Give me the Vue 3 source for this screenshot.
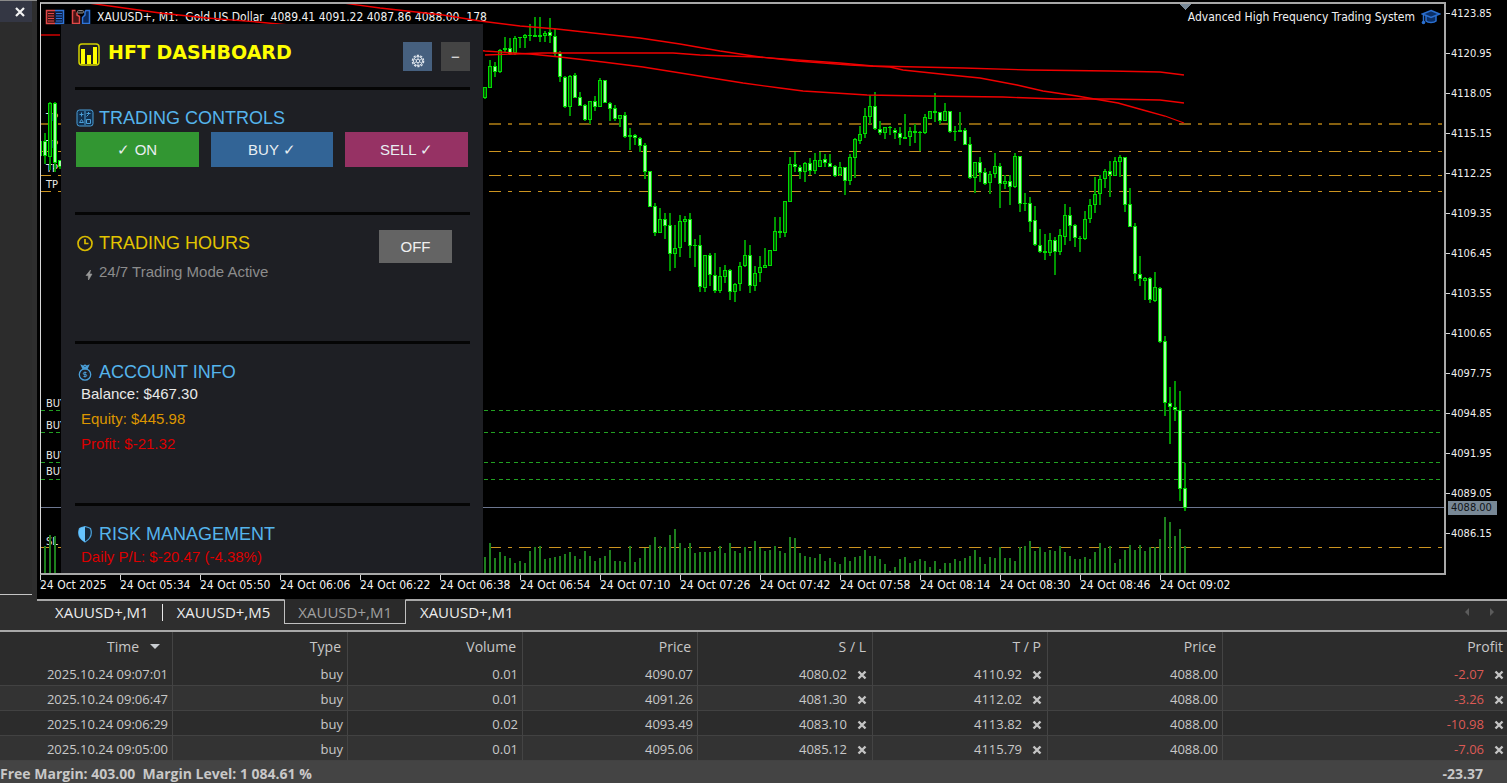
<script setup>
const prices = ['4123.85', '4120.95', '4118.05', '4115.15', '4112.25', '4109.35', '4106.45', '4103.55', '4100.65', '4097.75', '4094.85', '4091.95', '4089.05', '4086.15']
const times = ['24 Oct 2025', '24 Oct 05:34', '24 Oct 05:50', '24 Oct 06:06', '24 Oct 06:22', '24 Oct 06:38', '24 Oct 06:54', '24 Oct 07:10', '24 Oct 07:26', '24 Oct 07:42', '24 Oct 07:58', '24 Oct 08:14', '24 Oct 08:30', '24 Oct 08:46', '24 Oct 09:02']
const tabs = ['XAUUSD+,M1', 'XAUUSD+,M5', 'XAUUSD+,M1', 'XAUUSD+,M1']
const trades = [
  { time: '2025.10.24 09:07:01', volume: '0.01', open: '4090.07', sl: '4080.02', tp: '4110.92', profit: '-2.07' },
  { time: '2025.10.24 09:06:47', volume: '0.01', open: '4091.26', sl: '4081.30', tp: '4112.02', profit: '-3.26' },
  { time: '2025.10.24 09:06:29', volume: '0.02', open: '4093.49', sl: '4083.10', tp: '4113.82', profit: '-10.98' },
  { time: '2025.10.24 09:05:00', volume: '0.01', open: '4095.06', sl: '4085.12', tp: '4115.79', profit: '-7.06' },
]

// Candle rows: high, low, body top, body bottom, falling flag; three units per pixel.
const series = [
  { x: 40, step: 5, base: 0, rows: [[420, 470, 423, 468, 0], [400, 493, 423, 468, 1], [306, 510, 308, 470, 0], [306, 515, 308, 490, 1], [480, 507, 480, 500, 1]] },
  { x: 485, step: 5, base: 0, rows: [
    [262, 298, 262, 295, 0], [180, 265, 199, 264, 0], [187, 230, 199, 215, 1], [146, 220, 151, 215, 0], [112, 157, 143, 151, 0], [115, 165, 143, 163, 1], [108, 165, 113, 160, 0], [112, 145, 112, 115, 0], [103, 145, 106, 115, 0], [73, 123, 105, 108, 0],
    [52, 110, 105, 110, 0], [52, 125, 105, 110, 0], [93, 125, 98, 109, 0], [55, 130, 97, 108, 1], [87, 172, 108, 163, 1], [153, 245, 160, 231, 1], [228, 325, 230, 320, 1], [225, 347, 227, 320, 0], [220, 295, 226, 293, 1], [277, 317, 292, 317, 1],
    [313, 363, 316, 361, 1], [303, 373, 304, 361, 0], [289, 332, 304, 320, 1], [235, 322, 241, 320, 0], [239, 310, 240, 308, 1], [307, 362, 308, 328, 1], [315, 362, 325, 358, 1], [345, 380, 346, 357, 0], [337, 414, 346, 410, 1], [385, 449, 406, 410, 0],
    [403, 434, 405, 413, 1], [412, 455, 413, 437, 1], [430, 538, 435, 515, 1], [513, 620, 514, 620, 1], [610, 707, 619, 699, 1], [625, 700, 657, 699, 0], [640, 718, 657, 677, 1], [640, 812, 676, 763, 1], [675, 805, 743, 763, 0], [644, 771, 664, 745, 0],
    [648, 725, 657, 665, 0], [640, 775, 657, 737, 1], [717, 800, 735, 738, 0], [704, 876, 736, 860, 1], [765, 876, 766, 863, 0], [760, 857, 766, 826, 1], [760, 880, 826, 872, 1], [801, 880, 829, 872, 0], [794, 850, 811, 830, 0], [808, 899, 811, 875, 1],
    [850, 907, 852, 875, 0], [787, 872, 799, 853, 0], [719, 800, 766, 797, 0], [734, 880, 766, 857, 1], [797, 872, 818, 857, 0], [768, 846, 802, 818, 0], [745, 805, 796, 804, 0], [750, 797, 751, 797, 0], [652, 752, 694, 752, 0], [652, 714, 694, 699, 0],
    [603, 710, 604, 699, 0], [472, 606, 493, 605, 0], [455, 517, 491, 500, 1], [494, 538, 500, 515, 1], [487, 546, 488, 515, 0], [475, 526, 488, 512, 1], [460, 523, 481, 512, 0], [455, 500, 481, 500, 0], [463, 500, 478, 490, 1], [463, 502, 488, 500, 1], [495, 530, 499, 527, 1],
  ] },
  { x: 840, step: 5, base: 60, rows: [
    [306, 348, 322, 346, 0], [321, 405, 322, 362, 1], [281, 375, 292, 362, 0], [234, 354, 237, 293, 0], [198, 252, 221, 242, 0], [145, 235, 169, 223, 0], [104, 192, 139, 170, 0], [96, 209, 139, 207, 1], [183, 224, 206, 219, 1], [201, 238, 202, 219, 0],
    [197, 224, 202, 205, 0], [205, 238, 210, 218, 1], [202, 255, 218, 235, 1], [163, 238, 230, 236, 1], [202, 257, 214, 230, 0], [192, 250, 213, 218, 0], [213, 273, 215, 218, 0], [163, 223, 172, 220, 0], [153, 178, 154, 176, 0], [98, 186, 154, 159, 0],
    [155, 192, 157, 182, 1], [130, 183, 154, 182, 0], [152, 219, 154, 215, 1], [198, 242, 213, 216, 0], [155, 217, 211, 216, 0], [205, 256, 210, 254, 1], [232, 356, 252, 354, 1], [306, 400, 307, 354, 0], [291, 365, 307, 338, 1], [325, 374, 337, 371, 1],
    [333, 401, 341, 370, 0], [280, 354, 319, 343, 0], [310, 445, 319, 373, 1], [346, 388, 364, 373, 0], [346, 434, 364, 380, 1], [280, 384, 289, 381, 0], [288, 456, 289, 433, 1], [400, 452, 429, 433, 0], [411, 516, 428, 485, 1], [437, 557, 480, 556, 1],
    [508, 580, 556, 576, 1], [523, 599, 574, 578, 0], [520, 587, 541, 578, 0], [532, 644, 541, 575, 1], [508, 584, 526, 575, 0], [433, 554, 466, 530, 0], [442, 542, 466, 497, 1], [492, 560, 494, 533, 1], [528, 576, 533, 538, 0], [453, 539, 478, 538, 0],
    [418, 490, 436, 478, 0], [352, 460, 402, 436, 0], [346, 434, 356, 403, 0], [328, 385, 334, 357, 0],
  ] },
  { x: 1110, step: 5, base: 100, rows: [
    [183, 292, 213, 226, 1], [172, 228, 183, 227, 0], [164, 231, 172, 185, 0], [171, 336, 172, 314, 1], [265, 382, 311, 381, 1], [370, 542, 379, 523, 1], [468, 557, 521, 538, 1], [530, 600, 533, 542, 0], [530, 610, 533, 601, 1], [516, 606, 562, 602, 0],
    [561, 730, 563, 725, 1], [708, 947, 724, 908, 1], [862, 1033, 908, 920, 1], [843, 963, 922, 931, 1], [873, 1202, 931, 1167, 1], [1090, 1232, 1165, 1223, 1],
  ] },
]
const px = (v, base) => Math.round(v / 3) + base
const candles = series.flatMap(s => s.rows.map(([h, l, t, b, down], i) => {
  const top = px(t, s.base)
  return { x: s.x + i * s.step, high: px(h, s.base), low: px(l, s.base), top, size: Math.max(px(b, s.base) - top, 1), down }
}))

const volumeTops = [171, 130, 175, 156, 167, 175, 190, 182, 190, 152, 142, 138, 178, 175, 171, 167, 163, 156, 167, 178, 152, 167, 182, 175, 167, 149, 182, 182, 186, 138, 186, 175, 145, 134, 111, 137, 142, 104, 86, 130, 145, 130, 159, 156, 156, 156, 152, 138, 159, 130, 152, 159, 142, 152, 123, 145, 152, 149, 137, 152, 159, 111, 115, 159, 167, 171, 175, 163, 182, 175, 186, 193, 171, 182, 171, 167, 149, 167, 167, 178, 193, 212, 201, 178, 171, 190, 182, 178, 182, 201, 182, 208, 190, 190, 178, 182, 175, 167, 149, 171, 193, 171, 175, 142, 175, 175, 182, 142, 138, 123, 152, 142, 156, 149, 152, 138, 156, 167, 178, 178, 171, 178, 156, 130, 145, 138, 190, 178, 149, 134, 149, 134, 152, 142, 142, 118, 51, 66, 107, 88, 138]
const volumes = [{ x: 45, y: 546 }, { x: 50, y: 535 }, { x: 55, y: 536 }, ...volumeTops.map((v, i) => ({ x: 485 + i * 5, y: 500 + Math.round(v / 3) }))]

const averages = [
  '41,35 60,35',
  '88,3 117,7 160,13 207,18 257,22 300,26 485,51 530,54 560,57 603,62 643,67 693,75 743,83 780,88 803,91 867,95 923,96 1003,97 1057,99 1110,99 1160,100 1184,103',
  '343,3 380,8 443,15 480,21 520,26 557,29 593,33 640,38 680,44 720,51 760,57 797,61 850,65 890,67 903,70 950,75 980,78 1017,85 1043,91 1077,96 1118,103 1143,110 1165,116 1184,123',
  '485,55 515,54 542,53 673,53 700,55 757,57 840,63 873,66 963,68 1030,70 1110,71 1160,72 1184,75',
]
const targets = [151, 175, 191, 547]
const entries = [{ y: 410, t: 407 }, { y: 432, t: 429 }, { y: 462, t: 459 }, { y: 479, t: 475 }]
const tpLabels = [121, 148, 172, 188]
</script>

<template>
  <div class="terminal">
    <div class="workspace">
      <aside class="dock">
        <div class="dock-pane">
          <button class="dock-close" aria-label="Close pane">
            <svg width="12" height="12" viewBox="0 0 12 12"><path d="M2 2l8 8M10 2l-8 8" stroke="#f4f4f4" stroke-width="2.2" /></svg>
          </button>
        </div>
      </aside>

      <main class="main">
        <section class="chart">
          <div class="chart-body">
            <div class="plot">
              <div class="plot-head">
                <svg width="20" height="16" viewBox="0 0 20 16" fill="none">
                  <path d="M10 1.500H1.500V14.500H10" fill="#3a1010" stroke="#e04848" stroke-width="1.500" />
                  <path d="M10 1.500h8.500v13H10" fill="#0b1f45" stroke="#2f74d8" stroke-width="1.500" />
                  <path d="M3 4.500h6M3 7h6M3 9.500h6M3 12h6" stroke="#e04848" />
                  <path d="M11 4.500h6M11 7h6M11 9.500h6M11 12h6" stroke="#2f74d8" />
                </svg>
                <svg width="20" height="16" viewBox="0 0 20 16" fill="none">
                  <path d="M4.500 1.500h-3v13h7v-7L6 6V3.500" fill="#4a1515" stroke="#e04848" stroke-width="1.500" />
                  <path d="M15 1.500h3.500v13h-7V8.500L14 6V3z" fill="#0b2a5c" stroke="#2f74d8" stroke-width="1.500" />
                  <rect x="6.500" y="1.500" width="6" height="2.500" rx="1" fill="#222" stroke="#8a8a8a" />
                </svg>
                <span class="symbol">XAUUSD+, M1:&nbsp; Gold US Dollar&nbsp; 4089.41 4091.22 4087.86 4088.00&nbsp; 178</span>
                <span class="expert">Advanced High Frequency Trading System</span>
                <svg width="20" height="16" viewBox="0 0 20 16" fill="none">
                  <path d="M5 7v5c2 2 8 2 10 0V7" fill="#0b2f66" stroke="#2a6fd0" stroke-width="1.500" />
                  <path d="M10 1.500l8.500 3.500L10 8.500 1.500 5z" fill="#0b2f66" stroke="#2a6fd0" stroke-width="1.500" />
                  <path d="M2.500 5.500v7" stroke="#2a6fd0" stroke-width="1.500" />
                  <circle cx="2.500" cy="13.500" r="1.800" fill="#2a6fd0" />
                </svg>
              </div>

              <svg class="plot-art" width="100%" height="100%" shape-rendering="crispEdges">
                <g transform="translate(-41 -4)">
                  <path d="M1179 4h12l-6 6z" fill="#788896" />
                  <g stroke-dasharray="12 7 4 7">
                    <line x1="39" y1="124" x2="4000" y2="124" stroke="#86600f" stroke-width="2" />
                    <line v-for="y in targets" :key="y" x1="39" :y1="y + 0.5" x2="4000" :y2="y + 0.5" stroke="#cc9420" />
                  </g>
                  <g stroke="#22a022" stroke-dasharray="4 3.5">
                    <line v-for="e in entries" :key="e.y" x1="41" :y1="e.y + 0.5" x2="4000" :y2="e.y + 0.5" />
                  </g>
                  <g fill="#e8e8e8" class="order-label">
                    <text v-for="y in tpLabels" :key="y" x="46" :y="y">TP</text>
                    <text v-for="e in entries" :key="e.t" x="46" :y="e.t">BUY</text>
                    <text x="46" y="545">SL</text>
                  </g>
                  <line x1="41" y1="507.500" x2="4000" y2="507.500" stroke="#6c7690" />
                  <rect v-for="v in volumes" :key="v.x" :x="v.x - 1" :y="v.y" width="2" :height="573 - v.y" fill="#1e7f1e" />
                  <g v-for="(c, i) in candles" :key="i">
                    <rect :x="c.x - 1" :y="c.high" width="2" :height="c.low - c.high" fill="#009600" />
                    <rect :x="c.x - 2" :y="c.top" width="4" :height="c.size" fill="#00dc00" />
                    <rect v-if="c.size > 2" :x="c.x - 1" :y="c.top + 1" width="2" :height="c.size - 2" :fill="c.down ? '#a4ffa4' : '#005c00'" />
                  </g>
                  <polyline v-for="a in averages" :key="a" :points="a" fill="none" stroke="#f00000" stroke-width="1.3" shape-rendering="auto" />
                </g>
              </svg>

              <div class="panel">
                <header class="panel-head">
                  <svg class="logo" width="22" height="23" viewBox="0 0 22 23">
                    <rect x="1" y="1" width="20" height="21" rx="3" fill="none" stroke="#d2d200" stroke-width="1.500" />
                    <path d="M3 6h4v15H3zM9 12h4v9H9zM15 4h4v17h-4z" fill="#ffff00" />
                  </svg>
                  <h1>HFT DASHBOARD</h1>
                  <button class="head-btn gear" aria-label="Settings">
                    <svg width="14" height="14" viewBox="0 0 14 14" fill="none" stroke="#dfe6ee">
                      <circle cx="7" cy="7" r="5.600" stroke-width="1.400" stroke-dasharray="2.200 1.300" />
                      <circle cx="7" cy="7" r="4.500" />
                      <circle cx="7" cy="7" r="1.800" />
                      <path d="M7 2.500v3M7 8.500v3M3 4.800l2.500 1.400M8.500 7.800L11 9.200M11 4.800L8.500 6.200M5.500 7.800L3 9.200" stroke-width=".8" />
                    </svg>
                  </button>
                  <button class="head-btn" aria-label="Minimize">−</button>
                </header>

                <section class="block controls">
                  <h2>
                    <svg width="18" height="18" viewBox="0 0 18 18" fill="none" stroke="#4a9fd8">
                      <rect x="1" y="1" width="16" height="16" rx="2.500" fill="#12304e" />
                      <path d="M3.500 5.500h4M5.500 3.500v4M10.500 4.500h4M12.500 3v2.500l-2 2M3.500 13.500l2-3 2 3zM10.500 10.500h4v4h-4zM9 2v14" />
                    </svg>
                    TRADING CONTROLS
                  </h2>
                  <div class="toggles">
                    <button class="on">✓ ON</button>
                    <button class="buy">BUY ✓</button>
                    <button class="sell">SELL ✓</button>
                  </div>
                </section>

                <section class="block hours">
                  <div class="hours-row">
                    <h2 class="gold">
                      <svg width="18" height="18" viewBox="0 0 18 18" fill="none" stroke="#d8ba00" stroke-width="1.700">
                        <circle cx="9" cy="9.500" r="7" />
                        <path d="M9 5V9.500H12.500" />
                      </svg>
                      TRADING HOURS
                    </h2>
                    <button class="off">OFF</button>
                  </div>
                  <p class="mode">
                    <svg width="8" height="12" viewBox="0 0 8 12"><path d="M5.500 1L1 6.500h2.200L3.500 11 7 5H4.600z" fill="#9a9a9a" stroke="#9a9a9a" stroke-width=".6" /></svg>
                    24/7 Trading Mode Active
                  </p>
                </section>

                <section class="block account">
                  <h2>
                    <svg width="18" height="18" viewBox="0 0 18 18" fill="none" stroke="#4a9fd8" stroke-width="1.300">
                      <circle cx="9" cy="11.500" r="5.700" />
                      <path d="M7 5.800L5.500 2.500l2 .8L9 2l1.500 1.300 2-.8L11 5.800zM6.500 4.500h5" />
                      <path d="M10.500 9.500H8.300a1 1 0 000 2h1.400a1 1 0 010 2H7.500M9 8.500v6" stroke-width="1" />
                    </svg>
                    ACCOUNT INFO
                  </h2>
                  <p>Balance: $467.30</p>
                  <p class="equity">Equity: $445.98</p>
                  <p class="loss">Profit: $-21.32</p>
                </section>

                <section class="block risk">
                  <h2>
                    <svg width="18" height="18" viewBox="0 0 18 18">
                      <path d="M9 1.500c2 .5 4 1 5.500 2 2 5.500.5 10-5.500 13.500C3 13.500 1.500 9 3.500 3.500 5 2.500 7 2 9 1.500z" fill="#16283a" stroke="#4a9fd8" stroke-width="1.200" />
                      <path d="M9 1.500C7 2 5 2.500 3.500 3.500 1.500 9 3 13.500 9 17z" fill="#66c4ff" />
                    </svg>
                    RISK MANAGEMENT
                  </h2>
                  <p class="loss">Daily P/L: $-20.47 (-4.38%)</p>
                </section>
              </div>
            </div>

            <ul class="price-axis">
              <li v-for="p in prices" :key="p">{{ p }}</li>
              <li class="current">4088.00</li>
            </ul>
          </div>
          <ul class="time-axis">
            <li v-for="t in times" :key="t">{{ t }}</li>
          </ul>
        </section>

        <nav class="tabs">
          <button v-for="(t, i) in tabs" :key="i" :class="{ active: i === 2, first: i === 0 }">{{ t }}</button>
          <div class="arrows">
            <button aria-label="Scroll tabs left"><svg width="6" height="8" viewBox="0 0 6 8"><path d="M5 0v8L1 4z" fill="#5c5c5c" /></svg></button>
            <button aria-label="Scroll tabs right"><svg width="6" height="8" viewBox="0 0 6 8"><path d="M1 0v8l4-4z" fill="#5c5c5c" /></svg></button>
          </div>
        </nav>
      </main>
    </div>

    <table class="trades">
      <colgroup>
        <col class="c-time"><col class="c"><col class="c"><col class="c"><col class="c"><col class="c"><col class="c"><col>
      </colgroup>
      <thead>
        <tr>
          <th><button class="sort">Time <svg width="10" height="5" viewBox="0 0 10 5"><path d="M0 0h10L5 5z" fill="#c8ccd0" /></svg></button></th>
          <th>Type</th>
          <th>Volume</th>
          <th>Price</th>
          <th>S / L</th>
          <th>T / P</th>
          <th>Price</th>
          <th>Profit</th>
        </tr>
      </thead>
      <tbody>
        <tr v-for="t in trades" :key="t.time">
          <td>{{ t.time }}</td>
          <td>buy</td>
          <td>{{ t.volume }}</td>
          <td>{{ t.open }}</td>
          <td>{{ t.sl }}<button class="x" aria-label="Remove stop loss"><svg width="10" height="10" viewBox="0 0 10 10"><path d="M1.500 1.500l7 7M8.500 1.500l-7 7" stroke="#c4c4c4" stroke-width="2.400" /></svg></button></td>
          <td>{{ t.tp }}<button class="x" aria-label="Remove take profit"><svg width="10" height="10" viewBox="0 0 10 10"><path d="M1.500 1.500l7 7M8.500 1.500l-7 7" stroke="#c4c4c4" stroke-width="2.400" /></svg></button></td>
          <td>4088.00</td>
          <td class="profit">{{ t.profit }}<button class="x" aria-label="Close position"><svg width="10" height="10" viewBox="0 0 10 10"><path d="M1.500 1.500l7 7M8.500 1.500l-7 7" stroke="#c4c4c4" stroke-width="2.400" /></svg></button></td>
        </tr>
      </tbody>
    </table>

    <footer class="summary">
      <span>Free Margin: 403.00&nbsp; Margin Level: 1 084.61 %</span>
      <span>-23.37</span>
    </footer>
  </div>
</template>

<style>
body { margin: 0; background: #2e2e2e; }
</style>

<style scoped>
.terminal { min-height: 100vh; display: flex; flex-direction: column; overflow: hidden; font-family: "Open Sans", "Noto Sans", sans-serif; color: #c8c8c8; }
* { box-sizing: border-box; }
button { font: inherit; color: inherit; border: 0; padding: 0; background: none; cursor: pointer; }
ul { list-style: none; margin: 0; padding: 0; }
h1, h2, p { margin: 0; font-weight: 400; }
svg { flex: none; }

.workspace { flex: 1; display: flex; background: #2e2e2e; }
.dock { width: 37px; padding-bottom: 35px; display: flex; border-top: 1px solid #8a8a8a; }
.dock-pane { width: 32px; border-bottom: 1px solid #c4c4c4; background: #2c2c2c; }
.dock-close { width: 100%; height: 21px; display: flex; align-items: center; justify-content: flex-end; padding-right: 6px; background: #343744; }
.main { flex: 1; min-width: 0; display: flex; flex-direction: column; }

.chart { flex: 1; display: flex; flex-direction: column; background: #000; color: #f0f0f0; font-family: "DejaVu Sans Condensed", "Open Sans", sans-serif; font-size: 11px; padding: 2px 0 0 3px; }
.chart-body { flex: 1; display: flex; }
.plot { flex: 1; position: relative; overflow: hidden; border: 2px solid #a8a8a8; border-left: 1px solid #d8d8d8; }
.plot-head { display: flex; align-items: center; height: 16px; margin-top: 5px; padding: 0 3px 0 4px; gap: 6px; font-size: 12px; white-space: nowrap; }
.expert { margin-left: auto; }
.plot-art { position: absolute; inset: 0; pointer-events: none; }

.price-axis { position: relative; width: 61px; padding-top: 5px; }
.price-axis li { height: 40px; line-height: 14px; display: flex; }
.price-axis li::before { content: ""; width: 4px; height: 1px; margin: 6px 1px 0 0; background: #d8d8d8; }
.price-axis .current { position: absolute; left: 2px; bottom: 60px; width: 49px; height: 14px; padding-left: 3px; background: #788896; color: #101418; }
.price-axis .current::before { content: none; }

.time-axis { display: flex; height: 24px; overflow: hidden; font-size: 12px; }
.time-axis li { flex: 0 0 80px; position: relative; line-height: 21px; white-space: nowrap; }
.time-axis li::before { content: ""; position: absolute; left: 0; top: 0; width: 1px; height: 5px; background: #d8d8d8; }

.panel { position: absolute; left: 20px; top: 20px; bottom: 0; width: 422px; overflow: hidden; padding: 0 13px 0 14px; background: #1e1f24; font-family: "Liberation Sans", Arial, sans-serif; font-size: 15px; color: #e8e8e8; }
.panel-head { display: flex; align-items: center; height: 63px; padding: 2px 0 0 3px; }
.logo { margin-bottom: 5px; }
.panel-head h1 { flex: 1; margin: 0 0 9px 8px; font-family: "DejaVu Sans", sans-serif; font-size: 19px; font-weight: 700; color: #ffff00; }
.head-btn { width: 29px; height: 29px; margin-left: 9px; background: #444; color: #f0f0f0; font-size: 15px; }
.head-btn.gear { display: flex; align-items: flex-end; justify-content: center; padding-bottom: 3px; background: #46607f; }
.block { border-top: 3px solid #050505; }
h2 { display: flex; align-items: center; gap: 5px; height: 22px; padding-left: 1px; font-size: 18px; color: #55b4ec; }
h2.gold { color: #e2c400; }
.block p { height: 25px; line-height: 25px; padding-left: 6px; }
.controls { height: 125px; padding-top: 17px; }
.toggles { display: grid; grid-template-columns: repeat(3, 1fr); gap: 12px; margin: 3px 2px 0 1px; }
.toggles button { height: 35px; font-size: 15px; color: #e8eef2; }
.toggles .on { background: #329632; }
.toggles .buy { background: #326496; }
.toggles .sell { background: #963264; }
.hours { height: 129px; padding-top: 15px; }
.hours-row { display: flex; justify-content: space-between; }
.hours-row h2 { margin-top: 2px; }
.off { width: 73px; height: 33px; margin-right: 18px; background: #646464; color: #f0f0f0; }
.block .mode { display: flex; align-items: center; gap: 6px; padding-left: 10px; margin-top: -4px; color: #8c8c8c; }
.mode svg { margin-top: 7px; }
.account { height: 162px; padding-top: 17px; }
.account h2 { margin-bottom: -2px; }
.equity { color: #dc9600; }
.loss { color: #dc0000; }
.risk { padding-top: 17px; }
.risk p { margin-top: -1px; }

.tabs { display: flex; height: 31px; padding-left: 4px; border-top: 2px solid #a8a8a8; background: #2e2e2e; font-size: 15px; color: #ececec; }
.tabs > button { position: relative; height: 22px; padding: 0 14px; }
.tabs > .first::after { content: ""; position: absolute; right: 0; top: 3px; width: 1px; height: 17px; background: #e8e8e8; }
.tabs > .active { height: 25px; margin-top: -2px; border: 1px solid #c0c0c0; border-top-color: #2a2a2a; background: #2a2a2a; color: #a0a0a0; padding: 0 13px; }
.arrows { margin-left: auto; display: flex; gap: 19px; padding-right: 12px; align-items: center; height: 22px; }
.arrows button { display: flex; }

.trades { width: 100%; table-layout: fixed; border-collapse: separate; border-spacing: 0; border-top: 2px solid #a8a8a8; background: #2c2c2c; font-size: 13px; }
.c-time { width: 173px; }
.c { width: 175px; }
.trades th { height: 29px; padding: 0 6px 0 0; text-align: right; font-weight: 400; font-size: 14px; border-right: 1px solid #444; }
.trades td { height: 25px; padding: 2px 4px 0 0; text-align: right; border-right: 1px solid #444; border-bottom: 1px solid #424242; }
.trades th:last-child { border-right: 0; padding-right: 4px; }
.trades tbody tr:nth-child(even) { background: #333; }
.sort { display: inline-flex; align-items: center; gap: 11px; padding-right: 6px; }
.x { width: 10px; height: 10px; margin-left: 10px; vertical-align: -1px; display: inline-flex; }
.trades td:has(.x) { padding-right: 5px; }
.trades td.profit { color: #dc5a55; border-right: 0; padding-right: 3px; }

.summary { display: flex; justify-content: space-between; height: 22px; line-height: 25px; overflow: hidden; padding-right: 24px; background: #444; font-size: 14px; font-weight: 700; color: #c8c8c8; }
</style>
